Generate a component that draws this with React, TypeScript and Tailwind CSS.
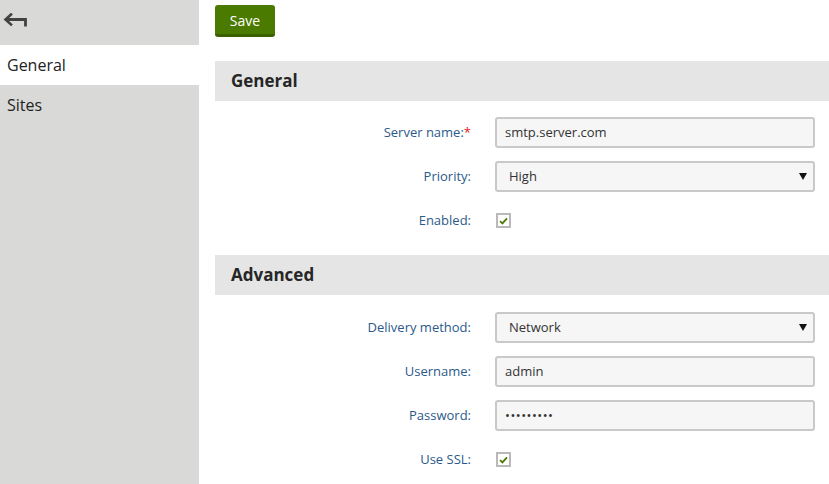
import React from "react";

const font = { fontFamily: '"Open Sans", "Noto Sans", "Liberation Sans", sans-serif' };

function Check() {
  return (
    <div className="w-[15px] h-[15px] border-2 border-[#b9b9b9] bg-white flex items-center justify-center">
      <svg width="9" height="8" viewBox="0 0 9 8">
        <path d="M1 4.2 L3.4 6.4 L8 1.4" fill="none" stroke="#4a7a00" strokeWidth="1.8" />
      </svg>
    </div>
  );
}

function Input({ value, select, password }: { value: string; select?: boolean; password?: boolean }) {
  return (
    <div className="w-[320px] h-[31px] border-2 border-[#c9c9c9] rounded-[3px] bg-[#f6f6f6] flex items-center justify-between pl-[8px] pr-[6px] text-[13px] text-[#333]">
      <span className={select ? "pl-[4px]" : ""} style={password ? { letterSpacing: "0.5px" } : undefined}>
        {value}
      </span>
      {select && (
        <svg width="8" height="7" viewBox="0 0 8 7">
          <path d="M0 0 H8 L4 7 Z" fill="#111" />
        </svg>
      )}
    </div>
  );
}

function Row({ label, required, children }: { label: string; required?: boolean; children: React.ReactNode }) {
  return (
    <div className="flex items-center h-[31px]">
      <div className="w-[256px] text-right text-[13px] text-[#2b5a8a] pr-0">
        {label}
        {required && <span className="text-[#e02020]">*</span>}
      </div>
      <div className="ml-[24px] flex items-center h-full">{children}</div>
    </div>
  );
}

function Header({ title }: { title: string }) {
  return (
    <div className="h-[40px] bg-[#e5e5e5] flex items-center pl-[16px] text-[17px] font-bold text-[#262626]">
      {title}
    </div>
  );
}

export default function App() {
  return (
    <div className="flex w-[829px] h-[484px] bg-white overflow-hidden" style={font}>
      <div className="w-[199px] bg-[#d9dad8] flex flex-col shrink-0">
        <div className="h-[45px] flex items-start pl-[3px] pt-[13px]">
          <svg width="25" height="14" viewBox="0 0 25 14">
            <path d="M8 1.5 L2.5 6.5 L8 11.5" fill="none" stroke="#424242" strokeWidth="2.6" strokeLinecap="square" />
            <path d="M3 6.5 H22.5 V13.5" fill="none" stroke="#424242" strokeWidth="2.8" />
          </svg>
        </div>
        <div className="h-[40px] bg-white flex items-center pl-[7px] text-[16px] text-[#222]">General</div>
        <div className="h-[40px] flex items-center pl-[7px] text-[16px] text-[#222]">Sites</div>
      </div>
      <div className="flex-1 pl-[16px] pt-[5px]">
        <button className="w-[60px] h-[32px] rounded-[3px] bg-[#4a7b00] border-b-[3px] border-[#3a6000] text-white text-[14px] flex items-center justify-center pt-[2px]">
          Save
        </button>
        <div className="mt-[24px]">
          <Header title="General" />
          <div className="pt-[16px] pb-[19px] flex flex-col gap-[13px]">
            <Row label="Server name:" required>
              <Input value="smtp.server.com" />
            </Row>
            <Row label="Priority:">
              <Input value="High" select />
            </Row>
            <Row label="Enabled:">
              <div className="pl-[1px]"><Check /></div>
            </Row>
          </div>
          <Header title="Advanced" />
          <div className="pt-[17px] flex flex-col gap-[13px]">
            <Row label="Delivery method:">
              <Input value="Network" select />
            </Row>
            <Row label="Username:">
              <Input value="admin" />
            </Row>
            <Row label="Password:">
              <Input value="•••••••••" password />
            </Row>
            <Row label="Use SSL:">
              <div className="pl-[1px]"><Check /></div>
            </Row>
          </div>
        </div>
      </div>
    </div>
  );
}
